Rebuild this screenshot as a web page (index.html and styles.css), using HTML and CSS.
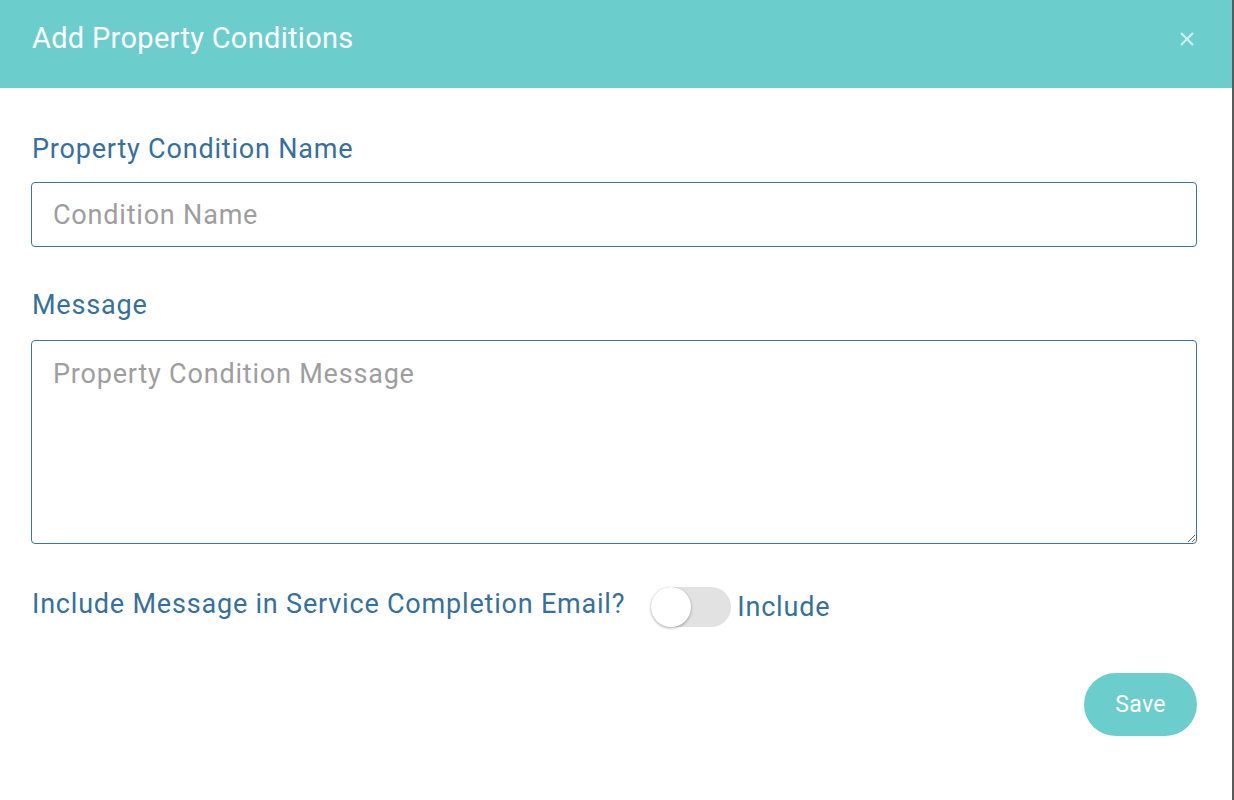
FILE: index.html
```html
<!DOCTYPE html>
<html>
<head>
<meta charset="utf-8">
<link rel="stylesheet" href="styles.css">
</head>
<body>
<div class="modal">
  <div class="modal-header">
    <h1 class="modal-title">Add Property Conditions</h1>
    <button class="close" aria-label="Close">
      <svg width="16" height="16" viewBox="0 0 16 16"><path d="M2 2 L14 14 M14 2 L2 14" stroke="#d2eeee" stroke-width="2.2" fill="none"/></svg>
    </button>
  </div>
  <div class="modal-body">
    <label class="field-label">Property Condition Name</label>
    <input class="text-input" type="text" placeholder="Condition Name">
    <label class="field-label msg-label">Message</label>
    <textarea class="text-area" placeholder="Property Condition Message"></textarea>
    <div class="include-row">
      <span class="field-label inline">Include Message in Service Completion Email?</span>
      <span class="switch"><span class="knob"></span></span>
      <span class="switch-text">Include</span>
    </div>
    <div class="actions">
      <button class="save">Save</button>
    </div>
  </div>
</div>
</body>
</html>
```

FILE: styles.css
```css
html, body {
  margin: 0;
  padding: 0;
  height: 800px;
  background: #5a5a5a;
  overflow: hidden;
}
body {
  font-family: Roboto, "Liberation Sans", sans-serif;
}
.modal {
  width: 1232px;
  height: 800px;
  background: #fff;
}
.modal-header {
  height: 88px;
  background: #6ccdcd;
  display: flex;
  align-items: center;
  justify-content: space-between;
  padding: 0 37px 0 32px;
  box-sizing: border-box;
}
.modal-title {
  margin: 0;
  margin-top: -12px;
  color: #fff;
  font-size: 29px;
  font-weight: 400;
  letter-spacing: 0.3px;
}
.close {
  background: none;
  border: 0;
  padding: 0;
  margin-top: -10px;
  width: 16px;
  height: 16px;
  display: flex;
}
.modal-body {
  padding: 44px 35px 0 31px;
  display: flex;
  flex-direction: column;
}
.field-label {
  color: #35709f;
  font-size: 27px;
  letter-spacing: 0.8px;
  line-height: 34px;
  padding-left: 1px;
}
.text-input {
  margin-top: 16px;
  height: 65px;
  box-sizing: border-box;
  border: 1px solid #3a75a6;
  border-radius: 4px;
  padding: 0 21px;
  font-family: inherit;
  font-size: 27px;
  letter-spacing: 0.8px;
  outline: none;
}
.text-input::placeholder, .text-area::placeholder {
  color: #9e9e9e;
}
.msg-label {
  margin-top: 41px;
}
.text-area {
  margin-top: 18px;
  height: 204px;
  box-sizing: border-box;
  border: 1px solid #3a75a6;
  border-radius: 4px;
  padding: 16px 21px;
  font-family: inherit;
  font-size: 27px;
  letter-spacing: 0.8px;
  line-height: 34px;
  outline: none;
  resize: vertical;
}
.include-row {
  margin-top: 43px;
  display: flex;
  align-items: center;
}
.include-row .field-label {
  margin-top: -7px;
}
.switch {
  margin-left: 26px;
  width: 80px;
  height: 40px;
  border-radius: 20px;
  background: #e2e2e2;
  position: relative;
  flex: none;
}
.knob {
  position: absolute;
  left: 0;
  top: 0;
  width: 40px;
  height: 40px;
  border-radius: 50%;
  background: #fff;
  box-shadow: 0 1px 3px rgba(0,0,0,0.35);
}
.switch-text {
  margin-left: 6px;
  color: #35709f;
  font-size: 27px;
  letter-spacing: 0.8px;
  line-height: 34px;
}
.actions {
  margin-top: 46px;
  display: flex;
  justify-content: flex-end;
}
.save {
  width: 113px;
  height: 63px;
  border: 0;
  border-radius: 32px;
  background: #6ccdcd;
  color: #fff;
  font-family: inherit;
  font-size: 23px;
  font-weight: 400;
  letter-spacing: 0.3px;
}
```
